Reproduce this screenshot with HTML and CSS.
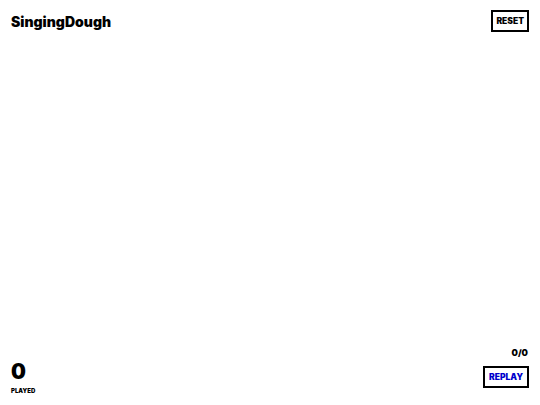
FILE: index.html
```html
<!DOCTYPE html>
<html>
<head>
<meta charset="utf-8">
<link rel="stylesheet" href="styles.css">
</head>
<body>
<div class="app">
  <header class="top">
    <div class="title">SingingDough</div>
    <button class="btn">RESET</button>
  </header>
  <main class="stage"></main>
  <footer class="bottom">
    <div class="stat">
      <div class="count">0</div>
      <div class="label">PLAYED</div>
    </div>
    <div class="right">
      <div class="progress">0/0</div>
      <button class="btn replay">REPLAY</button>
    </div>
  </footer>
</div>
</body>
</html>
```
FILE: styles.css
```css
html, body {
  margin: 0;
  padding: 0;
  background: #fff;
}
body {
  font-family: "Inter", "DejaVu Sans", sans-serif;
  font-weight: 900;
  color: #000;
}
.app {
  width: 540px;
  height: 405px;
  display: flex;
  flex-direction: column;
  box-sizing: border-box;
  padding: 10px 12px 10px 11px;
}
.top {
  display: flex;
  justify-content: space-between;
  align-items: flex-start;
}
.title {
  font-size: 14px;
  line-height: 16px;
  margin-top: 4px;
}
.btn {
  font-family: inherit;
  font-weight: 900;
  font-size: 8.5px;
  background: #fff;
  color: #000;
  border: 2px solid #000;
  padding: 0 3px;
  height: 22px;
  margin: 0 -1px 0 0;
  cursor: pointer;
}
.stage {
  flex: 1;
}
.bottom {
  display: flex;
  justify-content: space-between;
  align-items: flex-end;
}
.count {
  font-size: 21px;
  line-height: 20px;
}
.label {
  font-size: 6px;
  line-height: 8px;
  margin-top: 5px;
}
.right {
  display: flex;
  flex-direction: column;
  align-items: flex-end;
}
.progress {
  font-size: 9px;
  line-height: 10px;
  margin-bottom: 8px;
}
.replay {
  color: #0000cc;
  padding: 0 4px;
  margin-bottom: 7px;
}
```
